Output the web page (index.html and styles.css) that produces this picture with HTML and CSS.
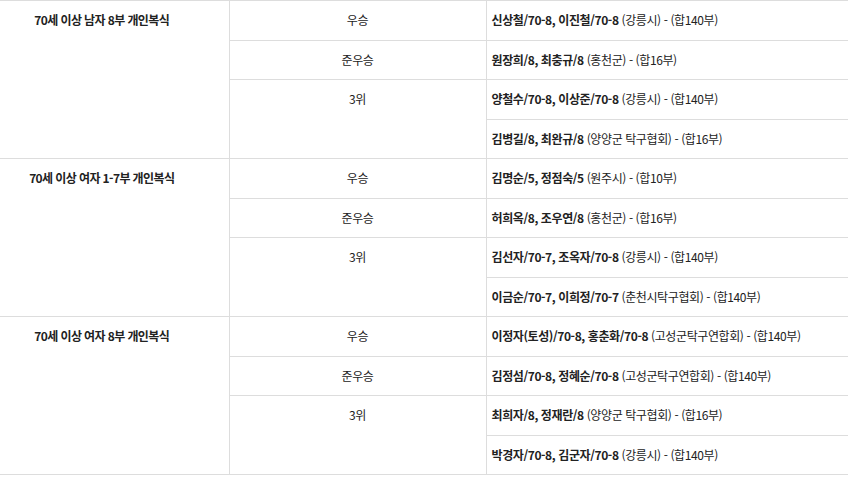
FILE: index.html
```html
<!DOCTYPE html>
<html lang="ko">
<head>
<meta charset="utf-8">
<link rel="stylesheet" href="styles.css">
</head>
<body>
<table class="results">
  <colgroup>
    <col class="c-event">
    <col class="c-rank">
    <col class="c-winner">
  </colgroup>
  <tbody>
    <tr>
      <td class="event" rowspan="4">70세 이상 남자 8부 개인복식</td>
      <td class="rank">우승</td>
      <td class="winner"><b>신상철/70-8, 이진철/70-8</b> (강릉시) - (합140부)</td>
    </tr>
    <tr>
      <td class="rank">준우승</td>
      <td class="winner"><b>원장희/8, 최충규/8</b> (홍천군) - (합16부)</td>
    </tr>
    <tr>
      <td class="rank" rowspan="2">3위</td>
      <td class="winner"><b>양철수/70-8, 이상준/70-8</b> (강릉시) - (합140부)</td>
    </tr>
    <tr>
      <td class="winner"><b>김병길/8, 최완규/8</b> (양양군 탁구협회) - (합16부)</td>
    </tr>
    <tr>
      <td class="event" rowspan="4">70세 이상 여자 1-7부 개인복식</td>
      <td class="rank">우승</td>
      <td class="winner"><b>김명순/5, 정점숙/5</b> (원주시) - (합10부)</td>
    </tr>
    <tr>
      <td class="rank">준우승</td>
      <td class="winner"><b>허희옥/8, 조우연/8</b> (홍천군) - (합16부)</td>
    </tr>
    <tr>
      <td class="rank" rowspan="2">3위</td>
      <td class="winner"><b>김선자/70-7, 조옥자/70-8</b> (강릉시) - (합140부)</td>
    </tr>
    <tr>
      <td class="winner"><b>이금순/70-7, 이희정/70-7</b> (춘천시탁구협회) - (합140부)</td>
    </tr>
    <tr>
      <td class="event" rowspan="4">70세 이상 여자 8부 개인복식</td>
      <td class="rank">우승</td>
      <td class="winner"><b>이정자(토성)/70-8, 홍춘화/70-8</b> (고성군탁구연합회) - (합140부)</td>
    </tr>
    <tr>
      <td class="rank">준우승</td>
      <td class="winner"><b>김정섬/70-8, 정혜순/70-8</b> (고성군탁구연합회) - (합140부)</td>
    </tr>
    <tr>
      <td class="rank" rowspan="2">3위</td>
      <td class="winner"><b>최희자/8, 정재란/8</b> (양양군 탁구협회) - (합16부)</td>
    </tr>
    <tr>
      <td class="winner"><b>박경자/70-8, 김군자/70-8</b> (강릉시) - (합140부)</td>
    </tr>
  </tbody>
</table>
</body>
</html>
```
FILE: styles.css
```css
html, body {
  margin: 0;
  padding: 0;
  background: #fff;
}

.results {
  border-collapse: collapse;
  table-layout: fixed;
  width: 848px;
  font-family: "Noto Sans CJK KR", "Noto Sans", sans-serif;
  font-size: 12px;
  color: #222;
  border-top: 1px solid #dddddd;
  border-bottom: 1px solid #dddddd;
}

.c-event { width: 229px; }
.c-rank { width: 257px; }
.c-winner { width: 362px; }

.results td {
  border-top: 1px solid #dddddd;
  padding: 10px 5px;
  height: 18.5px;
  line-height: 18.5px;
  vertical-align: top;
  white-space: nowrap;
  letter-spacing: -0.4px;
}

.results td.event {
  font-weight: bold;
  text-align: center;
  padding-right: 30px;
  letter-spacing: -0.6px;
  border-right: 1px solid #dddddd;
}

.results td.rank {
  text-align: center;
  border-right: 1px solid #dddddd;
}

.results td.winner {
  text-align: left;
}

.results td.winner b {
  font-weight: bold;
}
```
